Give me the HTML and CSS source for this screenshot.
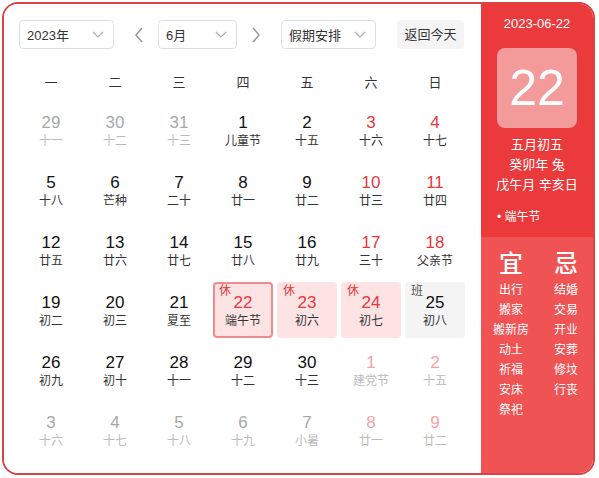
FILE: index.html
```html
<!DOCTYPE html>
<html lang="zh-CN">
<head>
<meta charset="utf-8">
<title>万年历</title>
<link rel="stylesheet" href="styles.css">
</head>
<body>
<div class="cal">
  <div class="main">
    <div class="toolbar">
      <div class="select sel-year"><span>2023年</span>
        <svg class="chev" width="12" height="7" viewBox="0 0 12 7"><path d="M1 1l5 5 5-5" fill="none" stroke="#a8abb2" stroke-width="1.2"/></svg>
      </div>
      <div class="arrow arrow-prev"><svg width="10" height="16" viewBox="0 0 10 16"><path d="M8 1L2 8l6 7" fill="none" stroke="#999" stroke-width="1.5"/></svg></div>
      <div class="select sel-month"><span>6月</span>
        <svg class="chev" width="12" height="7" viewBox="0 0 12 7"><path d="M1 1l5 5 5-5" fill="none" stroke="#a8abb2" stroke-width="1.2"/></svg>
      </div>
      <div class="arrow arrow-next"><svg width="10" height="16" viewBox="0 0 10 16"><path d="M2 1l6 7-6 7" fill="none" stroke="#999" stroke-width="1.5"/></svg></div>
      <div class="select sel-holiday"><span>假期安排</span>
        <svg class="chev" width="12" height="7" viewBox="0 0 12 7"><path d="M1 1l5 5 5-5" fill="none" stroke="#a8abb2" stroke-width="1.2"/></svg>
      </div>
      <div class="today-btn">返回今天</div>
    </div>

    <div class="weekdays">
      <div>一</div><div>二</div><div>三</div><div>四</div><div>五</div><div>六</div><div>日</div>
    </div>

    <div class="grid">
      <div class="cell other"><div class="num">29</div><div class="lunar">十一</div></div>
      <div class="cell other"><div class="num">30</div><div class="lunar">十二</div></div>
      <div class="cell other"><div class="num">31</div><div class="lunar">十三</div></div>
      <div class="cell"><div class="num">1</div><div class="lunar">儿童节</div></div>
      <div class="cell"><div class="num">2</div><div class="lunar">十五</div></div>
      <div class="cell weekend"><div class="num">3</div><div class="lunar">十六</div></div>
      <div class="cell weekend"><div class="num">4</div><div class="lunar">十七</div></div>

      <div class="cell"><div class="num">5</div><div class="lunar">十八</div></div>
      <div class="cell"><div class="num">6</div><div class="lunar">芒种</div></div>
      <div class="cell"><div class="num">7</div><div class="lunar">二十</div></div>
      <div class="cell"><div class="num">8</div><div class="lunar">廿一</div></div>
      <div class="cell"><div class="num">9</div><div class="lunar">廿二</div></div>
      <div class="cell weekend"><div class="num">10</div><div class="lunar">廿三</div></div>
      <div class="cell weekend"><div class="num">11</div><div class="lunar">廿四</div></div>

      <div class="cell"><div class="num">12</div><div class="lunar">廿五</div></div>
      <div class="cell"><div class="num">13</div><div class="lunar">廿六</div></div>
      <div class="cell"><div class="num">14</div><div class="lunar">廿七</div></div>
      <div class="cell"><div class="num">15</div><div class="lunar">廿八</div></div>
      <div class="cell"><div class="num">16</div><div class="lunar">廿九</div></div>
      <div class="cell weekend"><div class="num">17</div><div class="lunar">三十</div></div>
      <div class="cell weekend"><div class="num">18</div><div class="lunar">父亲节</div></div>

      <div class="cell"><div class="num">19</div><div class="lunar">初二</div></div>
      <div class="cell"><div class="num">20</div><div class="lunar">初三</div></div>
      <div class="cell"><div class="num">21</div><div class="lunar">夏至</div></div>
      <div class="cell rest selected"><span class="tag">休</span><div class="num">22</div><div class="lunar">端午节</div></div>
      <div class="cell rest"><span class="tag">休</span><div class="num">23</div><div class="lunar">初六</div></div>
      <div class="cell rest"><span class="tag">休</span><div class="num">24</div><div class="lunar">初七</div></div>
      <div class="cell work"><span class="tag">班</span><div class="num">25</div><div class="lunar">初八</div></div>

      <div class="cell"><div class="num">26</div><div class="lunar">初九</div></div>
      <div class="cell"><div class="num">27</div><div class="lunar">初十</div></div>
      <div class="cell"><div class="num">28</div><div class="lunar">十一</div></div>
      <div class="cell"><div class="num">29</div><div class="lunar">十二</div></div>
      <div class="cell"><div class="num">30</div><div class="lunar">十三</div></div>
      <div class="cell other weekend"><div class="num">1</div><div class="lunar">建党节</div></div>
      <div class="cell other weekend"><div class="num">2</div><div class="lunar">十五</div></div>

      <div class="cell other"><div class="num">3</div><div class="lunar">十六</div></div>
      <div class="cell other"><div class="num">4</div><div class="lunar">十七</div></div>
      <div class="cell other"><div class="num">5</div><div class="lunar">十八</div></div>
      <div class="cell other"><div class="num">6</div><div class="lunar">十九</div></div>
      <div class="cell other"><div class="num">7</div><div class="lunar">小暑</div></div>
      <div class="cell other weekend"><div class="num">8</div><div class="lunar">廿一</div></div>
      <div class="cell other weekend"><div class="num">9</div><div class="lunar">廿二</div></div>
    </div>
  </div>

  <div class="side">
    <div class="side-top">
      <div class="side-date">2023-06-22</div>
      <div class="big-day">22</div>
      <div class="lunar-info">
        <div>五月初五</div>
        <div>癸卯年 兔</div>
        <div>戊午月 辛亥日</div>
      </div>
      <div class="festival">• 端午节</div>
    </div>
    <div class="side-bottom">
      <div class="col">
        <div class="col-title">宜</div>
        <div>出行</div><div>搬家</div><div>搬新房</div><div>动土</div><div>祈福</div><div>安床</div><div>祭祀</div>
      </div>
      <div class="col">
        <div class="col-title">忌</div>
        <div>结婚</div><div>交易</div><div>开业</div><div>安葬</div><div>修坟</div><div>行丧</div>
      </div>
    </div>
  </div>
</div>
</body>
</html>
```

FILE: styles.css
```css
* { box-sizing: border-box; }
html, body { margin: 0; padding: 0; background: #fff; }
body {
  font-family: "Liberation Sans", "Noto Sans CJK SC", sans-serif;
  color: #333;
}
.cal {
  margin: 2px 0 0 2px;
  width: 593px;
  height: 473px;
  border: 2px solid #d84343;
  border-radius: 16px;
  overflow: hidden;
  display: flex;
}
.main {
  width: 477px;
  padding: 16px 0 0 15px;
  background: #fff;
}
.toolbar {
  display: flex;
  align-items: center;
  height: 29px;
}
.select {
  height: 29px;
  border: 1px solid #dcdfe6;
  border-radius: 4px;
  display: flex;
  align-items: center;
  justify-content: space-between;
  padding: 0 9px 0 7px;
  font-size: 13px;
  color: #333;
}
.sel-year { width: 95px; }
.sel-month { width: 79px; margin-left: 9px; }
.sel-holiday { width: 95px; margin-left: 15px; }
.arrow {
  width: 20px;
  height: 29px;
  display: flex;
  align-items: center;
  justify-content: center;
}
.arrow-prev { margin-left: 15px; }
.arrow-next { margin-left: 9px; }
.today-btn {
  margin-left: 21px;
  width: 67px;
  height: 29px;
  border-radius: 4px;
  background: #f4f4f5;
  font-size: 13px;
  line-height: 29px;
  text-align: center;
  color: #333;
}
.weekdays {
  margin: 24px 0 0 2px;
  display: grid;
  grid-template-columns: repeat(7, 60px);
  column-gap: 4px;
  font-size: 13px;
  line-height: 20px;
  text-align: center;
  color: #333;
}
.grid {
  margin: 9px 0 0 2px;
  display: grid;
  grid-template-columns: repeat(7, 60px);
  grid-auto-rows: 56px;
  gap: 4px;
}
.cell {
  position: relative;
  border-radius: 4px;
  text-align: center;
  padding-top: 11px;
}
.num {
  font-size: 17px;
  line-height: 20px;
  color: #111;
}
.lunar {
  font-size: 12px;
  line-height: 16px;
  color: #333;
}
.weekend .num { color: #e5393b; }
.other .num { color: #a8a8a8; }
.other .lunar { color: #bbb; }
.other.weekend .num { color: #f2a3a5; }
.rest { background: #fde3e4; }
.rest .num { color: #e5393b; }
.rest .tag { color: #e5393b; }
.selected { border: 2px solid #ef8b8f; padding-top: 9px; }
.selected .tag { top: 0; left: 4px; }
.work { background: #f4f4f5; }
.work .num { color: #111; }
.work .tag { color: #555; }
.tag {
  position: absolute;
  top: 2px;
  left: 6px;
  font-size: 12px;
  line-height: 14px;
}
.side {
  width: 112px;
  display: flex;
  flex-direction: column;
  color: #fff;
}
.side-top {
  height: 233px;
  background: #eb3a3b;
  padding-top: 10px;
  text-align: center;
}
.side-date {
  font-size: 13px;
  line-height: 20px;
}
.big-day {
  margin: 14px auto 0;
  width: 80px;
  height: 80px;
  border-radius: 8px;
  background: #f39a9b;
  font-size: 50px;
  line-height: 80px;
  text-align: center;
}
.lunar-info {
  margin-top: 7px;
  font-size: 13px;
  line-height: 20px;
}
.festival {
  margin-top: 12px;
  padding-left: 16px;
  text-align: left;
  font-size: 12px;
  line-height: 20px;
}
.side-bottom {
  flex: 1;
  background: #ef5354;
  padding: 11px 0 0 5px;
  display: flex;
  gap: 5px;
}
.col {
  width: 50px;
  text-align: center;
  font-size: 12px;
  line-height: 20px;
}
.col-title {
  font-size: 24px;
  line-height: 32px;
  font-weight: 500;
}
```
